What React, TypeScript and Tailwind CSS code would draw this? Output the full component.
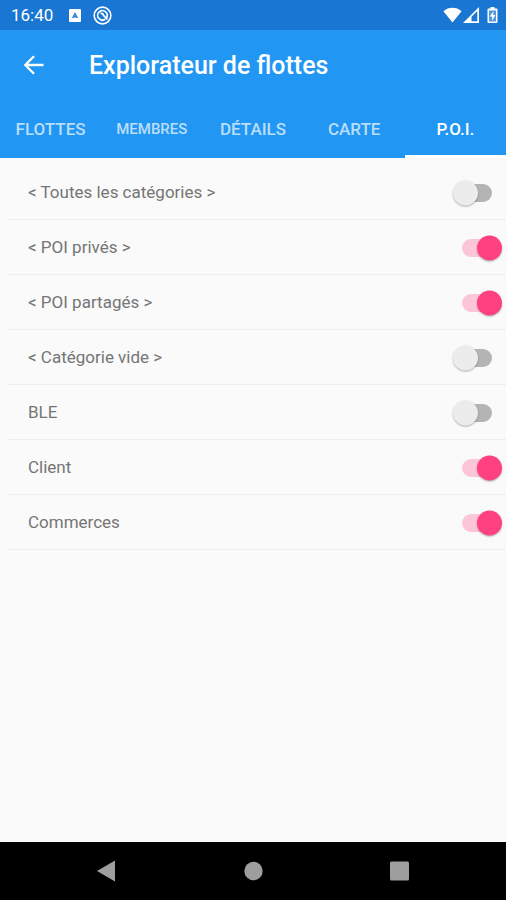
import { useState } from "react";

interface Category {
  id: string;
  label: string;
  visible: boolean;
}

const tabs = [
  { key: "fleets", label: "FLOTTES", size: "text-[17px]" },
  { key: "members", label: "MEMBRES", size: "text-[15px]" },
  { key: "details", label: "DÉTAILS", size: "text-[17px]" },
  { key: "map", label: "CARTE", size: "text-[17px]" },
  { key: "poi", label: "P.O.I.", size: "text-[17px]" }
];

const initialCategories: Category[] = [
  { id: "all", label: "< Toutes les catégories >", visible: false },
  { id: "private", label: "< POI privés >", visible: true },
  { id: "shared", label: "< POI partagés >", visible: true },
  { id: "empty", label: "< Catégorie vide >", visible: false },
  { id: "ble", label: "BLE", visible: false },
  { id: "client", label: "Client", visible: true },
  { id: "shops", label: "Commerces", visible: true }
];

function StatusBar() {
  return (
    <div className="flex h-[30px] shrink-0 items-center justify-between bg-[#1976d2] pr-2 pl-[11px] text-white">
      <div className="flex items-center">
        <span className="text-[17px] leading-5">16:40</span>
        <svg className="ml-4 h-[13px] w-3" viewBox="0 0 12 13" aria-hidden="true">
          <rect width="12" height="13" rx="1" fill="currentColor" />
          <path d="M3.6 9 6 4.600l2.400 4.400M4.400 7.800h3.200" fill="none" stroke="#1976d2" strokeWidth="1.300" />
        </svg>
        <svg className="ml-3 size-[19px]" viewBox="0 0 18 18" fill="none" stroke="currentColor" aria-hidden="true">
          <circle cx="9" cy="9" r="7.900" strokeWidth="1.500" />
          <path d="M5.200 11.600A4.500 4.500 0 0 1 12.800 6.400C14 8.200 13.700 10 12.900 11.400" strokeWidth="1.500" />
          <path d="M7.200 7.200c1.400-.6 2.600.2 2.800 1.600l3.600 4M5.400 11.400c1.800 2.200 4.400 2.400 6.200 1.200" strokeWidth="1.700" />
        </svg>
      </div>
      <div className="flex items-center">
        <svg className="h-4 w-[19px]" viewBox="0 0 19 16" aria-hidden="true">
          <path d="M.4 4.200C5.600-.4 13.400-.4 18.600 4.200L9.500 15.500Z" fill="currentColor" />
        </svg>
        <svg className="ml-px h-4 w-4" viewBox="0 0 16 16" aria-hidden="true">
          <path d="M0 16 16 0v16Zm8.500-1.700h5.800V4L8.500 9.800Z" fill="currentColor" fillRule="evenodd" />
        </svg>
        <svg className="ml-2 h-4 w-[11px]" viewBox="0 0 11 16" aria-hidden="true">
          <path d="M3.500 0h4v1.500H9.500a1 1 0 0 1 1 1V15a1 1 0 0 1-1 1h-8a1 1 0 0 1-1-1V2.500a1 1 0 0 1 1-1h2Z" fill="currentColor" />
          <rect x="2" y="3.500" width="7" height="11" fill="#1976d2" fillOpacity=".75" />
          <path d="M6.400 4.200 2.800 9.400h2.300v4.400L8.500 8H6.200Z" fill="currentColor" />
        </svg>
      </div>
    </div>
  );
}

function AppBar() {
  return (
    <header className="flex h-[71px] items-center px-[23px]">
      <button type="button" aria-label="Retour" className="text-white">
        <svg className="size-[22px]" viewBox="0 0 22 22" fill="none" stroke="currentColor" strokeWidth="2.300" aria-hidden="true">
          <path d="M20.500 10H2.800M11 1.300 2.300 10l8.700 8.700" />
        </svg>
      </button>
      <h1 className="ml-11 text-[25px] font-medium text-white">Explorateur de flottes</h1>
    </header>
  );
}

function CategoryRow({ category, onToggle }: { category: Category; onToggle: () => void }) {
  return (
    <li className="ml-2 border-b border-[#eeeeee]">
      <label className="flex h-[54px] items-center justify-between pt-0.5 pr-[14px] pl-5">
        <span className="text-[17px] text-[#757575]">{category.label}</span>
        <input
          type="checkbox"
          role="switch"
          checked={category.visible}
          onChange={onToggle}
          className="relative h-[18px] w-[30px] appearance-none rounded-full bg-[#b4b4b4] before:absolute before:top-1/2 before:-left-[9px] before:size-[25px] before:-translate-y-1/2 before:rounded-full before:bg-[#ececec] before:shadow-[0_1px_2px_rgba(0,0,0,0.3)] checked:bg-[#fdc5d8] checked:before:left-[15px] checked:before:bg-[#ff4081]"
        />
      </label>
    </li>
  );
}

function NavigationBar() {
  return (
    <nav className="flex h-[58px] shrink-0 items-center justify-around bg-black px-[34px] text-[#9e9e9e]">
      <button type="button" aria-label="Précédent">
        <svg className="size-[22px]" viewBox="0 0 22 22" fill="currentColor" aria-hidden="true">
          <path d="M19 .5v21L1 11Z" />
        </svg>
      </button>
      <button type="button" aria-label="Accueil">
        <svg className="size-[22px]" viewBox="0 0 22 22" fill="currentColor" aria-hidden="true">
          <circle cx="11.500" cy="11" r="9.200" />
        </svg>
      </button>
      <button type="button" aria-label="Applications récentes">
        <svg className="size-[22px]" viewBox="0 0 22 22" fill="currentColor" aria-hidden="true">
          <rect x="2" y="1.500" width="19" height="19" rx="1.500" />
        </svg>
      </button>
    </nav>
  );
}

export default function App() {
  const [activeTab, setActiveTab] = useState("poi");
  const [categories, setCategories] = useState(initialCategories);

  function toggleCategory(id: string) {
    setCategories((current) =>
      current.map((item) => (item.id === id ? { ...item, visible: !item.visible } : item))
    );
  }

  return (
    <div className="flex min-h-screen flex-col bg-[#fafafa] font-[Roboto,sans-serif]">
      <StatusBar />
      <div className="bg-[#2196f3]">
        <AppBar />
        <div role="tablist" className="grid h-[57px] grid-cols-5">
          {tabs.map((tab) => (
            <button
              key={tab.key}
              type="button"
              role="tab"
              aria-selected={tab.key === activeTab}
              onClick={() => setActiveTab(tab.key)}
              className={`border-y-3 border-t-transparent font-medium ${tab.size} ${
                tab.key === activeTab
                  ? "border-b-white text-white"
                  : "border-b-transparent text-white/70"
              }`}
            >
              {tab.label}
            </button>
          ))}
        </div>
      </div>
      <main className="flex-1 pt-[7px]">
        <ul>
          {categories.map((category) => (
            <CategoryRow
              key={category.id}
              category={category}
              onToggle={() => toggleCategory(category.id)}
            />
          ))}
        </ul>
      </main>
      <NavigationBar />
    </div>
  );
}
